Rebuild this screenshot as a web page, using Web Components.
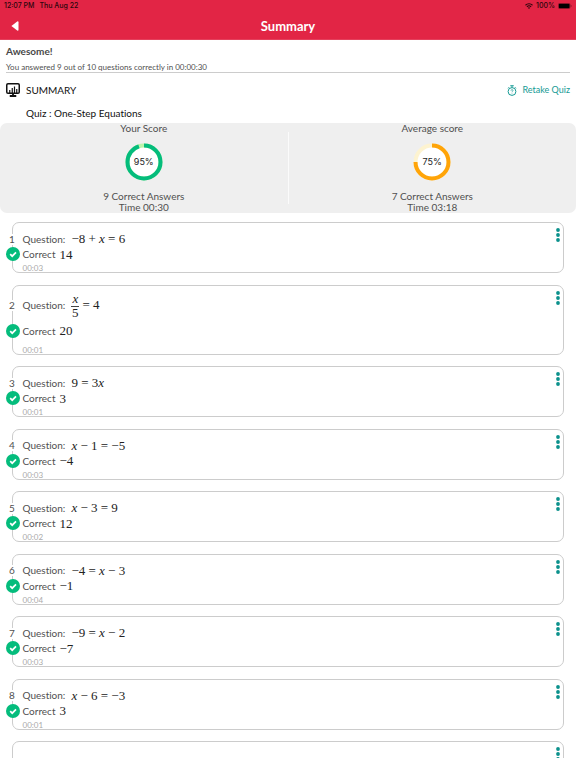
<!DOCTYPE html>
<html lang="en">
<head>
<meta charset="utf-8">
<meta name="viewport" content="width=device-width, initial-scale=1">
<title>Summary</title>
<style>
  body {
    margin: 0;
    background: #fff;
    color: #505050;
    font: 10px/11px Lato, "Noto Sans", sans-serif;
    font-variant-ligatures: none;
  }
  .num { font: 13px/16px "Liberation Serif", serif; color: #222; }
</style>
</head>
<body>

<quiz-page>
  <status-bar slot="top" time="12:07 PM" date="Thu Aug 22" battery="100%"></status-bar>
  <page-header slot="top">Summary</page-header>

  <result-message slot="top">
    <span slot="title">Awesome!</span>
    You answered 9 out of 10 questions correctly in 00:00:30
  </result-message>

  <summary-heading slot="top">
    SUMMARY
    <span slot="quiz">Quiz : One-Step Equations</span>
  </summary-heading>

  <score-panel slot="top">
    <score-ring label="Your Score" value="95" answers="9 Correct Answers" time="Time 00:30" style="--ring: #04bc7c; --track: #baf5ac"></score-ring>
    <score-ring label="Average score" value="75" answers="7 Correct Answers" time="Time 03:18" style="--ring: #ffa408; --track: #fdf3d0"></score-ring>
  </score-panel>

  <quiz-question number="1" time="00:03"><span class="num" slot="question">−8 + <i>x</i> = 6</span><span class="num" slot="answer">14</span></quiz-question>
  <quiz-question number="2" time="00:01" tall><span class="num" slot="question"><math-frac><i slot="top">x</i>5</math-frac> = 4</span><span class="num" slot="answer">20</span></quiz-question>
  <quiz-question number="3" time="00:01"><span class="num" slot="question">9 = 3<i>x</i></span><span class="num" slot="answer">3</span></quiz-question>
  <quiz-question number="4" time="00:03"><span class="num" slot="question"><i>x</i> − 1 = −5</span><span class="num" slot="answer">−4</span></quiz-question>
  <quiz-question number="5" time="00:02"><span class="num" slot="question"><i>x</i> − 3 = 9</span><span class="num" slot="answer">12</span></quiz-question>
  <quiz-question number="6" time="00:04"><span class="num" slot="question">−4 = <i>x</i> − 3</span><span class="num" slot="answer">−1</span></quiz-question>
  <quiz-question number="7" time="00:03"><span class="num" slot="question">−9 = <i>x</i> − 2</span><span class="num" slot="answer">−7</span></quiz-question>
  <quiz-question number="8" time="00:01"><span class="num" slot="question"><i>x</i> − 6 = −3</span><span class="num" slot="answer">3</span></quiz-question>
  <quiz-question blank></quiz-question>
</quiz-page>

<script>
  // small helper, every element here gets its markup the same way
  function attach(el, html) {
    const template = document.createElement('template');
    template.innerHTML = html;
    el.attachShadow({mode: 'open'}).appendChild(template.content.cloneNode(true));
  }

  customElements.define('quiz-page', class extends HTMLElement {
    constructor() {
      super();
      attach(this, `
        <style>
          :host {
            display: flex;
            flex-direction: column;
            height: 100vh;
            box-sizing: border-box;
            padding-bottom: 10px;
          }
          main {
            flex: 1;
            min-height: 0;
            overflow-y: auto;
            scrollbar-width: none;
            padding-top: 9px;
          }
        </style>
        <slot name="top"></slot>
        <main><slot></slot></main>
      `);
    }
  });

  customElements.define('status-bar', class extends HTMLElement {
    constructor() {
      super();
      attach(this, `
        <style>
          :host {
            display: flex;
            align-items: center;
            gap: 5px;
            height: 12px;
            padding: 0 4px;
            background: #e22545;
            color: #2a060c;
            font: 500 7px/12px Inter, sans-serif;
          }
          .right { margin-left: auto; display: flex; align-items: center; gap: 3px; }
          svg { display: block; }
        </style>
        <span>${this.getAttribute('time')}</span>
        <span>${this.getAttribute('date')}</span>
        <div class="right">
          <svg width="8" height="6" viewBox="0 0 16 12" fill="none" stroke="#2a060c" stroke-width="2.2">
            <path d="M1 4.5a10 10 0 0 1 14 0M3.8 7.6a6 6 0 0 1 8.4 0"/>
            <path d="M8 12L5.8 9.6a3.4 3.4 0 0 1 4.4 0z" fill="#2a060c" stroke="none"/>
          </svg>
          <span>${this.getAttribute('battery')}</span>
          <svg width="14" height="6" viewBox="0 0 14 6">
            <rect x=".3" y=".3" width="11.8" height="5.4" rx="1.4" fill="none" stroke="#7a1526" stroke-width=".6"/>
            <rect x=".8" y=".8" width="10.8" height="4.4" rx=".9" fill="#000"/>
            <path d="M12.8 2v2q.9-.3.9-1t-.9-1z" fill="#7a1526"/>
          </svg>
        </div>
      `);
    }
  });

  customElements.define('page-header', class extends HTMLElement {
    constructor() {
      super();
      attach(this, `
        <style>
          :host {
            display: grid;
            grid-template-columns: 30px 1fr 30px;
            align-items: center;
            height: 28px;
            box-sizing: border-box;
            border-bottom: 1px solid #e4405c;
            background: #e22545;
            color: #fff;
          }
          h1 { margin: 0; text-align: center; font-size: 13px; line-height: 16px; }
          button { display: block; width: 30px; height: 24px; padding: 0; border: 0; background: none; }
          svg { display: block; margin: 0 auto; }
        </style>
        <button aria-label="Back">
          <svg width="8" height="10" viewBox="0 0 8 10"><path d="M.4 5L6.2.5Q7.5 0 7.5 1.2v7.6q0 1.2-1.3.7z" fill="#fff"/></svg>
        </button>
        <h1><slot></slot></h1>
      `);
    }
  });

  customElements.define('result-message', class extends HTMLElement {
    constructor() {
      super();
      attach(this, `
        <style>
          :host {
            display: block;
            margin: 0 6px;
            padding-top: 4px;
            border-bottom: 1px solid #ccc;
          }
          h2 { margin: 0 0 4px; font-size: 10px; line-height: 14px; color: #484848; }
          p { margin: 0; font-size: 8px; line-height: 10px; }
        </style>
        <h2><slot name="title"></slot></h2>
        <p><slot></slot></p>
      `);
    }
  });

  customElements.define('summary-heading', class extends HTMLElement {
    constructor() {
      super();
      attach(this, `
        <style>
          :host { display: block; padding: 9px 6px 3px; color: #111; }
          .row { display: flex; align-items: center; gap: 6px; height: 16px; }
          h2, h3 { margin: 0; font-size: 10px; line-height: 14px; font-weight: 400; }
          h3 { margin: 8px 0 0 20px; }
          button {
            display: flex;
            align-items: center;
            gap: 5px;
            margin-left: auto;
            padding: 0;
            border: 0;
            background: none;
            color: #159a94;
            font: 9px/12px Lato, "Noto Sans", sans-serif;
          }
          svg { display: block; }
        </style>
        <div class="row">
          <svg width="14" height="14" viewBox="0 0 28 28" fill="none" stroke="#111" stroke-width="3">
            <rect x="1.5" y="1.5" width="25" height="19" rx="2.5"/>
            <path d="M7.5 20v-6M12.5 20V10M17 20V7M21.5 20v-8" stroke-width="2.4"/>
            <path d="M14 20v5M7.5 26h13" stroke-width="3.6"/>
          </svg>
          <h2><slot></slot></h2>
          <button>
            <svg width="10" height="11" viewBox="0 0 20 22" fill="none" stroke="#159a94" stroke-width="2">
              <circle cx="10" cy="13" r="7.8"/>
              <path d="M6.5 1.5h7M10 1.5V5M16 4.5l2 2M4 4.5l-2 2"/>
              <path d="M8 11.2q.2-2 2-2t2 1.8q0 1-1 1.6t-1 1.6M10 15.6v1.4" stroke-width="1.4"/>
            </svg>
            Retake Quiz
          </button>
        </div>
        <h3><slot name="quiz"></slot></h3>
      `);
    }
  });

  customElements.define('score-panel', class extends HTMLElement {
    constructor() {
      super();
      attach(this, `
        <style>
          :host {
            display: grid;
            grid-template-columns: 1fr 1px 1fr;
            border-radius: 7px;
            background: #efefef;
          }
          ::slotted(score-ring) { grid-row: 1; }
          i { grid-area: 1 / 2; margin: 9px 0; background: #fbfbfb; }
        </style>
        <i></i>
        <slot></slot>
      `);
    }
  });

  customElements.define('score-ring', class extends HTMLElement {
    constructor() {
      super();
      const value = Number(this.getAttribute('value'));
      attach(this, `
        <style>
          :host {
            display: flex;
            flex-direction: column;
            align-items: center;
          }
          .ring {
            display: grid;
            place-items: center;
            width: 38px;
            height: 38px;
            margin: 9px 0 10px;
            color: #222;
            font: 9px/12px Inter, sans-serif;
          }
          .ring > * { grid-area: 1 / 1; }
        </style>
        <span>${this.getAttribute('label')}</span>
        <div class="ring">
          <svg width="38" height="38" viewBox="0 0 38 38">
            <circle cx="19" cy="19" r="16.5" fill="#fff" stroke="var(--track)" stroke-width="4"/>
            <circle cx="19" cy="19" r="16.5" fill="none" stroke="var(--ring)" stroke-width="4"
              pathLength="100" stroke-dasharray="${value} 100" transform="rotate(-90 19 19)"/>
          </svg>
          <span>${value}%</span>
        </div>
        <span>${this.getAttribute('answers')}</span>
        <span>${this.getAttribute('time')}</span>
      `);
    }
  });

  // x over 5
  customElements.define('math-frac', class extends HTMLElement {
    constructor() {
      super();
      attach(this, `
        <style>
          :host {
            display: inline-flex;
            flex-direction: column;
            vertical-align: middle;
            text-align: center;
            line-height: 12px;
          }
          .top { padding: 0 1px 1px; border-bottom: 1px solid #444; }
        </style>
        <span class="top"><slot name="top"></slot></span>
        <span><slot></slot></span>
      `);
    }
  });

  customElements.define('quiz-question', class extends HTMLElement {
    constructor() {
      super();
      const blank = this.hasAttribute('blank');
      attach(this, `
        <style>
          :host {
            display: block;
            position: relative;
            box-sizing: border-box;
            min-height: 51px;
            margin: 0 2% 2%;
            padding: 8px 0 0 10px;
            border: 1px solid #ccc;
            border-radius: 7px;
          }
          .row { position: relative; display: flex; align-items: center; height: 16px; }
          .question { gap: 6px; }
          .answer { gap: 4px; height: 15px; }
          .time { margin-top: 2px; font-size: 8px; line-height: 8px; color: #aaa; }
          :host([tall]) .question { height: 24px; margin-bottom: 6px; }
          :host([tall]) .time { margin-top: 7px; }

          /* these two sit on the left border */
          .number {
            position: absolute;
            left: -15px;
            width: 9px;
            background: #fff;
            text-align: center;
          }
          .check { position: absolute; left: -17px; top: 0; }

          .menu {
            position: absolute;
            top: 4px;
            right: 3px;
            padding: 0;
            border: 0;
            background: none;
          }
          svg { display: block; }
        </style>
        <button class="menu" aria-label="More">
          <svg width="4" height="16" viewBox="0 0 4 16" fill="#0b918c">
            <circle cx="2" cy="3" r="1.9"/><circle cx="2" cy="8" r="1.9"/><circle cx="2" cy="13" r="1.9"/>
          </svg>
        </button>
        ${blank ? '' : `
        <div class="row question">
          <span class="number">${this.getAttribute('number')}</span>
          <span>Question:</span>
          <slot name="question"></slot>
        </div>
        <div class="row answer">
          <svg class="check" width="14" height="14" viewBox="0 0 14 14">
            <circle cx="7" cy="7" r="7" fill="#04bc7c"/>
            <path d="M4.2 7.2L6.2 9.2L10 5.4" fill="none" stroke="#fff" stroke-width="1.7"/>
          </svg>
          <span>Correct</span>
          <slot name="answer"></slot>
        </div>
        <div class="time">${this.getAttribute('time')}</div>`}
      `);
    }
  });
</script>
</body>
</html>
